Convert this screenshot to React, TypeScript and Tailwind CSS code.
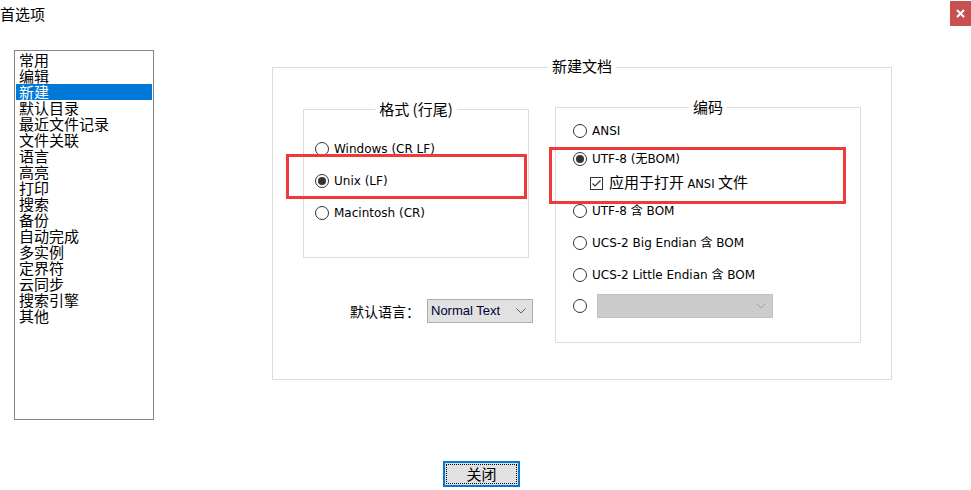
import React from "react";

const CJK = "font-['Noto_Sans_CJK_SC',sans-serif]";
const LAT = "font-['DejaVu_Sans','Noto_Sans_CJK_SC',sans-serif]";

function Radio({ checked }: { checked?: boolean }) {
  return (
    <div className="w-[14px] h-[14px] rounded-full border border-[#333333] bg-white flex items-center justify-center shrink-0">
      {checked && <div className="w-[8px] h-[8px] rounded-full bg-[#333333]" />}
    </div>
  );
}

function Chevron({ color }: { color: string }) {
  return (
    <svg width="10" height="6" viewBox="0 0 10 6" className="shrink-0">
      <path d="M0.5 0.5 L5 5 L9.5 0.5" fill="none" stroke={color} strokeWidth="1" />
    </svg>
  );
}

function RadioRow({ label, checked, className = "" }: { label: React.ReactNode; checked?: boolean; className?: string }) {
  return (
    <div className={`h-[16px] flex items-center ${className}`}>
      <Radio checked={checked} />
      <span className={`ml-[5px] text-[12px] leading-[16px] text-black whitespace-nowrap ${LAT}`}>{label}</span>
    </div>
  );
}

const items = [
  "常用",
  "编辑",
  "新建",
  "默认目录",
  "最近文件记录",
  "文件关联",
  "语言",
  "高亮",
  "打印",
  "搜索",
  "备份",
  "自动完成",
  "多实例",
  "定界符",
  "云同步",
  "搜索引擎",
  "其他",
];

export default function App() {
  return (
    <div className={`relative w-[971px] h-[490px] bg-white overflow-hidden flex flex-col ${CJK}`}>
      {/* title bar */}
      <div className="h-[26px] flex items-start justify-between">
        <div className="pt-[4px] text-[15px] leading-[20px] text-black">首选项</div>
        <div className="mt-[1px] w-[21px] h-[25px] bg-[#c75050] flex items-center justify-center">
          <svg width="9" height="9" viewBox="0 0 9 9">
            <path d="M1 1 L8 8 M8 1 L1 8" stroke="white" strokeWidth="2" />
          </svg>
        </div>
      </div>

      {/* content row */}
      <div className="mt-[24px] flex items-start">
        {/* list */}
        <div className="ml-[14px] w-[140px] h-[370px] border border-[#828790] bg-white pt-[1px] px-[1px]">
          {items.map((it) => (
            <div
              key={it}
              className={`h-[16px] leading-[16px] text-[15px] pl-[3px] whitespace-nowrap ${
                it === "新建" ? "bg-[#0078d7] text-white" : "text-black"
              }`}
            >
              {it}
            </div>
          ))}
        </div>

        {/* main group */}
        <div className="ml-[118px] mt-[17px] relative w-[620px] h-[313px] border border-[#dcdcdc] flex items-start pl-[30px] pt-[41px]">
          <div className="absolute left-1/2 -translate-x-1/2 -top-[11px] bg-white px-[4px] text-[15px] leading-[18px] text-black whitespace-nowrap">
            新建文档
          </div>

          {/* left column */}
          <div className="w-[230px] flex flex-col">
            <div className="relative w-[226px] h-[149px] border border-[#dcdcdc] flex flex-col pl-[11px] pt-[31px]">
              <div className="absolute left-1/2 -translate-x-1/2 -top-[10px] bg-white px-[4px] text-[15px] leading-[18px] text-black whitespace-nowrap">
                格式 (行尾)
              </div>
              <RadioRow label="Windows (CR LF)" />
              <RadioRow label="Unix (LF)" checked className="mt-[16px]" />
              <RadioRow label="Macintosh (CR)" className="mt-[16px]" />
            </div>

            <div className="mt-[41px] flex items-center justify-end">
              <span className="mr-[7px] text-[14px] leading-[18px] text-black whitespace-nowrap">默认语言：</span>
              <div className="w-[106px] h-[24px] bg-[#e1e1e1] border border-[#adadad] flex items-center justify-between pl-[3px] pr-[6px]">
                <span className="text-[13px] leading-[16px] text-[#000033] font-['Liberation_Sans',sans-serif] whitespace-nowrap">
                  Normal Text
                </span>
                <Chevron color="#606060" />
              </div>
            </div>
          </div>

          {/* encoding group */}
          <div className="ml-[22px] -mt-[2px] relative w-[306px] h-[236px] border border-[#dcdcdc] flex flex-col pl-[17px] pt-[15px]">
            <div className="absolute left-1/2 -translate-x-1/2 -top-[10px] bg-white px-[4px] text-[15px] leading-[18px] text-black whitespace-nowrap">
              编码
            </div>
            <RadioRow label="ANSI" />
            <RadioRow label="UTF-8 (无BOM)" checked className="mt-[12px]" />
            <div className="mt-[8px] h-[16px] flex items-center pl-[17px]">
              <div className="w-[13px] h-[13px] border border-[#333333] bg-white flex items-center justify-center shrink-0">
                <svg width="11" height="11" viewBox="0 0 11 11">
                  <path d="M1.5 5.5 L4 8 L9.5 2.5" fill="none" stroke="#333333" strokeWidth="1.2" />
                </svg>
              </div>
              <span className="ml-[6px] text-[15px] leading-[16px] text-black whitespace-nowrap">
                应用于打开 <span className={`text-[11.5px] ${LAT}`}>ANSI</span> 文件
              </span>
            </div>
            <RadioRow label="UTF-8 含 BOM" className="mt-[12px]" />
            <RadioRow label="UCS-2 Big Endian 含 BOM" className="mt-[16px]" />
            <RadioRow label="UCS-2 Little Endian 含 BOM" className="mt-[16px]" />
            <div className="mt-[11px] h-[24px] flex items-center">
              <Radio />
              <div className="ml-[10px] w-[176px] h-[24px] bg-[#cccccc] border border-[#bfbfbf] flex items-center justify-end pr-[6px]">
                <Chevron color="#a0a0a0" />
              </div>
            </div>
          </div>
        </div>
      </div>

      {/* close button */}
      <div className="mt-[41px] ml-[443px] w-[77px] h-[26px] border-2 border-[#0078d7] bg-[#e1e1e1] p-[1px]">
        <div className="w-full h-full border border-dotted border-black flex items-center justify-center text-[15px] leading-[18px] text-black">
          关闭
        </div>
      </div>

      {/* annotation overlays */}
      <div className="absolute left-[286px] top-[154px] w-[241px] h-[45px] border-[3px] border-[#f03a3a]" />
      <div className="absolute left-[549px] top-[147px] w-[297px] h-[57px] border-[3px] border-[#f03a3a]" />
    </div>
  );
}
